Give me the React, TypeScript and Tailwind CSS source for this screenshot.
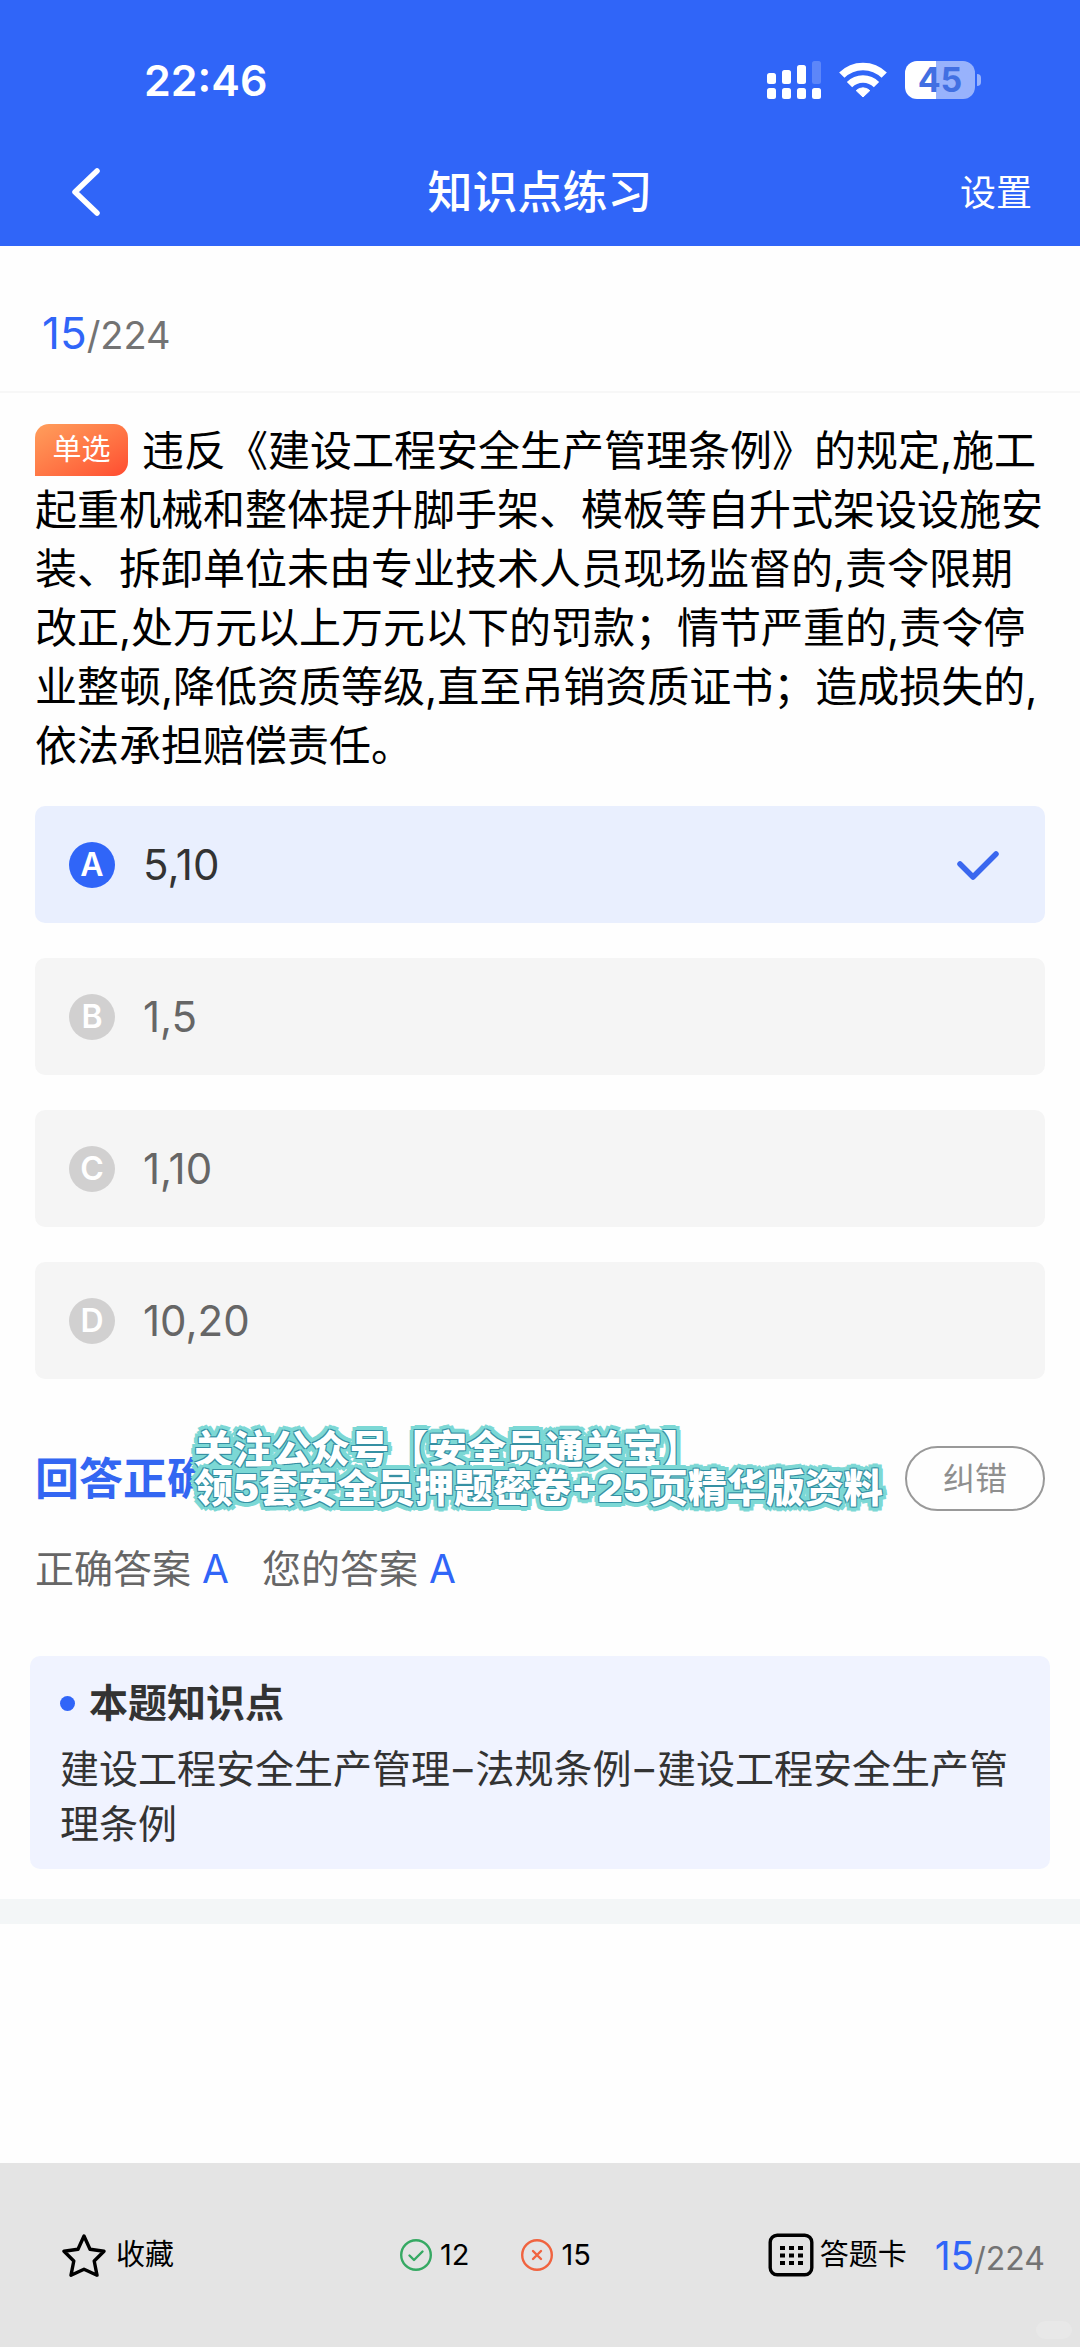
import { useState } from "react";

const OPTIONS = [
  { key: "A", label: "5,10" },
  { key: "B", label: "1,5" },
  { key: "C", label: "1,10" },
  { key: "D", label: "10,20" },
];

export default function App() {
  const [selected, setSelected] = useState("A");

  return (
    <div className="relative flex min-h-screen flex-col bg-[#fefefe] font-['Inter','Noto_Sans_CJK_SC',sans-serif] text-black">
      <header className="bg-[#3065f8] pt-[50px] text-white">
        <StatusBar />
        <nav
          aria-label="页面导航"
          className="mt-[30px] grid h-[106px] grid-cols-[1fr_auto_1fr] items-center px-12"
        >
          <button type="button" aria-label="返回" className="justify-self-start pl-[22px]">
            <ChevronIcon className="h-[50px] w-8" />
          </button>
          <h1 className="text-[45px] leading-[60px] font-medium">知识点练习</h1>
          <a href="#settings" className="justify-self-end text-[36px] leading-[60px]">
            设置
          </a>
        </nav>
      </header>

      <div className="flex h-[147px] items-center border-b-2 border-[#f7f7f7] px-[42px] pt-[30px]">
        <Progress current={15} total={224} className="text-[38px]" currentClassName="text-[44px]" />
      </div>

      <main className="px-[35px] pt-[28px]">
        <p className="text-[42px] leading-[59px]">
          <span className="mt-[3px] mr-[14px] inline-flex h-[52px] w-[93px] items-center justify-center rounded-[14px] rounded-bl-none bg-linear-to-br from-[#ff9e5c] to-[#ff4a30] align-top text-[29px] leading-[52px] text-white">
            单选
          </span>
          违反《建设工程安全生产管理条例》的规定,施工起重机械和整体提升脚手架、模板等自升式架设设施安装、拆卸单位未由专业技术人员现场监督的,责令限期改正,处万元以上万元以下的罚款；情节严重的,责令停业整顿,降低资质等级,直至吊销资质证书；造成损失的,依法承担赔偿责任。
        </p>

        <fieldset aria-label="选项" className="mt-[31px] flex flex-col gap-[35px]">
          {OPTIONS.map((option) => (
            <Option
              key={option.key}
              letter={option.key}
              label={option.label}
              checked={selected === option.key}
              onSelect={() => setSelected(option.key)}
            />
          ))}
        </fieldset>

        <section className="mt-[67px]">
          <div className="relative flex h-[65px] items-center justify-between">
            <h2 className="text-[44px] leading-[60px] font-bold text-[#3366f2]">回答正确</h2>
            <button
              type="button"
              className="h-[65px] w-[140px] rounded-full border-2 border-[#999] text-[32px] leading-[60px] text-[#8f8f8f]"
            >
              纠错
            </button>
            {/* 推广文字浮在结果行上方：白字 + 深色细边 + 浅青色外描边 */}
            <p className="absolute top-[-17px] left-[159px] text-[39px] leading-[39px] font-black whitespace-nowrap text-white [text-shadow:1px_1px_0_#3590a3,-1px_1px_0_#3590a3,1px_-1px_0_#3590a3,-1px_-1px_0_#3590a3,5px_0_0_#7cd8d5,-5px_0_0_#7cd8d5,0_5px_0_#7cd8d5,0_-5px_0_#7cd8d5,4px_4px_0_#7cd8d5,-4px_4px_0_#7cd8d5,4px_-4px_0_#7cd8d5,-4px_-4px_0_#7cd8d5,3px_0_0_#7cd8d5,-3px_0_0_#7cd8d5,0_3px_0_#7cd8d5,0_-3px_0_#7cd8d5]">
              关注公众号【安全员通关宝】
              <br />
              领5套安全员押题密卷+25页精华版资料
            </p>
          </div>
          <p className="mt-7 flex gap-[33px] text-[39px] leading-[60px] text-[#666]">
            <span>
              正确答案 <span className="text-[#3065f8]">A</span>
            </span>
            <span>
              您的答案 <span className="text-[#3065f8]">A</span>
            </span>
          </p>
        </section>
      </main>

      <section className="mx-[30px] mt-[57px] rounded-[10px] bg-[#f0f3ff] px-[30px] pt-[20px] pb-[18px] text-[39px] text-[#333]">
        <h3 className="flex items-center gap-[14px] leading-[54px] font-bold">
          <span aria-hidden="true" className="size-[15px] rounded-full bg-[#3065f8]" />
          本题知识点
        </h3>
        <p className="mt-[11px] leading-[55px]">
          建设工程安全生产管理<span className="mx-[3px]">–</span>法规条例
          <span className="mx-[3px]">–</span>建设工程安全生产管理条例
        </p>
      </section>

      <div className="mt-[30px] h-[25px] bg-[#f3f6f7]" />

      <footer className="mt-auto flex h-[184px] items-center bg-[#e4e4e4] pr-[35px] pl-[62px] text-[29px]">
        <button type="button" className="flex basis-[338px] items-center gap-[10px]">
          <StarIcon className="size-11" />
          收藏
        </button>
        <div className="flex items-center gap-[52px]">
          <span className="flex items-center gap-2">
            <ResultIcon className="size-8 text-[#36a963]" path="M9.5 16.5l4.5 4.5 8.5-8.5" />
            12
          </span>
          <span className="flex items-center gap-2">
            <ResultIcon className="size-8 text-[#f0633f]" path="M12 12l8 8M20 12l-8 8" />
            15
          </span>
        </div>
        <button type="button" className="ml-auto flex items-center gap-[6px]">
          <CardIcon className="h-11 w-[46px]" />
          答题卡
        </button>
        <Progress
          current={15}
          total={224}
          className="ml-[28px] pt-1 text-[32px]"
          currentClassName="text-[39px]"
        />
      </footer>
      <span
        aria-hidden="true"
        className="absolute right-2 bottom-2 h-[18px] w-9 rounded-full bg-[#e8e8e8]"
      />
    </div>
  );
}

function StatusBar() {
  return (
    <div className="flex h-[60px] items-center justify-between pr-[99px] pl-36">
      <time className="text-[43px] leading-[60px] font-semibold">22:46</time>
      <div className="flex items-center gap-[18px]">
        <svg viewBox="0 0 54 38" aria-hidden="true" className="h-[38px] w-[54px]" fill="currentColor">
          <rect x="0" y="12" width="9" height="11" rx="2.5" />
          <rect x="15" y="9" width="9" height="14" rx="2.5" />
          <rect x="30" y="4" width="9" height="19" rx="2.5" />
          <rect x="45" y="0" width="9" height="23" rx="2.5" opacity="0.22" />
          <rect x="0" y="27" width="9" height="11" rx="2.5" />
          <rect x="15" y="27" width="9" height="11" rx="2.5" />
          <rect x="30" y="27" width="9" height="11" rx="2.5" />
          <rect x="45" y="27" width="9" height="11" rx="2.5" />
        </svg>
        <svg viewBox="0 0 48 36" aria-hidden="true" className="h-9 w-12" fill="none">
          <g stroke="currentColor" strokeWidth="7.5">
            <path d="M2.8 13.2a30 30 0 0 1 42.4 0" />
            <path d="M10.5 22.6a19 19 0 0 1 27 0" />
          </g>
          <path
            d="M17.2 28.6a9.8 9.8 0 0 1 13.600 0L24 35Z"
            fill="currentColor"
            stroke="currentColor"
            strokeLinejoin="round"
          />
        </svg>
        <div className="flex items-center gap-[2px]">
          <span className="flex h-[38px] w-[70px] items-center justify-center rounded-[12px] bg-linear-to-r from-white from-45% to-[#98b2fc] to-45% text-[34px] leading-[38px] font-bold text-[#416fe2]">
            45
          </span>
          <span aria-hidden="true" className="h-3 w-1 rounded-r-full bg-[#98b2fc]" />
        </div>
      </div>
    </div>
  );
}

type ProgressProps = {
  current: number;
  total: number;
  className: string;
  currentClassName: string;
};

function Progress({ current, total, className, currentClassName }: ProgressProps) {
  return (
    <p className={`leading-[60px] text-[#737373] ${className}`}>
      <span className={`text-[#3065f8] ${currentClassName}`}>{current}</span>/{total}
    </p>
  );
}

type OptionProps = {
  letter: string;
  label: string;
  checked: boolean;
  onSelect: () => void;
};

function Option({ letter, label, checked, onSelect }: OptionProps) {
  return (
    <label
      className={`relative flex h-[117px] items-center rounded-[10px] pr-[45px] pl-[34px] text-[42px] ${
        checked ? "bg-[#e9effe] text-[#333]" : "bg-[#f5f5f5] text-[#666]"
      }`}
    >
      <input
        type="radio"
        name="answer"
        value={letter}
        checked={checked}
        onChange={onSelect}
        className="sr-only"
      />
      <span
        className={`mr-7 flex size-[46px] items-center justify-center rounded-full text-[32px] font-semibold text-white ${
          checked ? "bg-[#3065f8]" : "bg-[#d1d0d0]"
        }`}
      >
        {letter}
      </span>
      {label}
      {checked && (
        <svg viewBox="0 0 44 32" aria-hidden="true" className="ml-auto h-8 w-11">
          <path
            d="M4 15l13 13L40 5"
            fill="none"
            stroke="#3a67ef"
            strokeWidth="5.5"
            strokeLinecap="round"
            strokeLinejoin="round"
          />
        </svg>
      )}
    </label>
  );
}

function ChevronIcon({ className }: { className?: string }) {
  return (
    <svg viewBox="0 0 32 50" aria-hidden="true" className={className}>
      <path
        d="M27 3 5 24l22 21"
        fill="none"
        stroke="currentColor"
        strokeWidth="5.5"
        strokeLinecap="round"
        strokeLinejoin="round"
      />
    </svg>
  );
}

function StarIcon({ className }: { className?: string }) {
  return (
    <svg viewBox="0 0 44 44" aria-hidden="true" className={className}>
      <path
        d="M22 3l6 13.2 14 2.1-9.8 9.7 2.8 14.2L22 36.2 9 42.2 11.8 28 2 18.3l14-2.1Z"
        fill="none"
        stroke="currentColor"
        strokeWidth="3.4"
        strokeLinejoin="round"
      />
    </svg>
  );
}

function ResultIcon({ className, path }: { className?: string; path: string }) {
  return (
    <svg viewBox="0 0 32 32" aria-hidden="true" className={className}>
      <g
        fill="none"
        stroke="currentColor"
        strokeWidth="2.4"
        strokeLinecap="round"
        strokeLinejoin="round"
      >
        <circle cx="16" cy="16" r="14.8" />
        <path d={path} />
      </g>
    </svg>
  );
}

function CardIcon({ className }: { className?: string }) {
  return (
    <svg viewBox="0 0 46 44" aria-hidden="true" className={className}>
      <rect
        x="2.2"
        y="2.2"
        width="41.6"
        height="39.6"
        rx="7"
        fill="none"
        stroke="currentColor"
        strokeWidth="3.4"
      />
      <path
        d="M12 15h5m4 0h5m4 0h5M12 22.5h5m4 0h5m4 0h5M12 30h5m4 0h5m4 0h5"
        stroke="currentColor"
        strokeWidth="4"
      />
    </svg>
  );
}
